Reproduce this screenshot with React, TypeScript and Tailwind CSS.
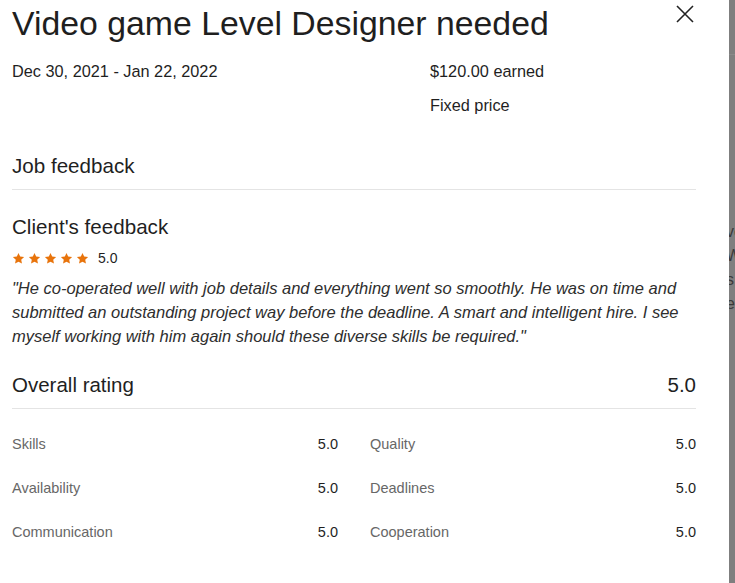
import React from 'react';

type Rating = { label: string; value: string };

const ratings: Rating[] = [
  { label: 'Skills', value: '5.0' },
  { label: 'Quality', value: '5.0' },
  { label: 'Availability', value: '5.0' },
  { label: 'Deadlines', value: '5.0' },
  { label: 'Communication', value: '5.0' },
  { label: 'Cooperation', value: '5.0' },
];

const Star = () => (
  <svg width="13" height="13" viewBox="0 0 24 24" fill="#e8740c">
    <path d="M12 1.8l3.1 6.6 7.2.9-5.3 5 1.4 7.1L12 17.9l-6.4 3.5 1.4-7.1-5.3-5 7.2-.9z" />
  </svg>
);

const CloseIcon = () => (
  <svg width="18" height="18" viewBox="0 0 18 18" fill="none" stroke="#222" strokeWidth="1.6">
    <path d="M1 1l16 16M17 1L1 17" />
  </svg>
);

export default function App() {
  return (
    <div
      className="flex w-[735px] h-[583px] overflow-hidden bg-white text-[#1f1f1f]"
      style={{ fontFamily: '"Liberation Sans", Arial, sans-serif' }}
    >
      {/* modal panel */}
      <div className="w-[729px] shrink-0 bg-white pl-[12px] pr-[33px]">
        <div className="flex items-start justify-between">
          <h1 className="mt-[3px] text-[33.8px] leading-[40px] font-normal">Video game Level Designer needed</h1>
          <div className="mt-[5px] mr-[2px]">
            <CloseIcon />
          </div>
        </div>

        <div className="mt-[16px] grid grid-cols-[418px_1fr] text-[16.3px] leading-[24px]">
          <div>Dec 30, 2021 - Jan 22, 2022</div>
          <div className="flex flex-col gap-[10px]">
            <div>$120.00 earned</div>
            <div>Fixed price</div>
          </div>
        </div>

        <div className="mt-[35px] border-b border-[#e4e4e4] pb-[9px] text-[20.6px] leading-[28px]">Job feedback</div>

        <div className="mt-[23px] text-[20.6px] leading-[28px]">Client's feedback</div>
        <div className="mt-[9px] flex h-[16px] items-center">
          <div className="flex gap-[3px]">
            <Star />
            <Star />
            <Star />
            <Star />
            <Star />
          </div>
          <span className="ml-[9px] text-[14px] leading-[16px]">5.0</span>
        </div>
        <p className="mt-[10px] text-[16.5px] leading-[24px] italic text-[#2e2e2e]">
          "He co-operated well with job details and everything went so smoothly. He was on time and submitted an
          outstanding project way before the deadline. A smart and intelligent hire. I see myself working with him again
          should these diverse skills be required."
        </p>

        <div className="mt-[23px] flex justify-between border-b border-[#e4e4e4] pb-[9px] text-[20.5px] leading-[28px]">
          <span>Overall rating</span>
          <span>5.0</span>
        </div>

        <div className="mt-[25px] grid grid-cols-2 gap-x-[32px] gap-y-[24px] text-[14.5px] leading-[20px]">
          {ratings.map((r) => (
            <div key={r.label} className="flex justify-between">
              <span className="text-[#676767]">{r.label}</span>
              <span>{r.value}</span>
            </div>
          ))}
        </div>
      </div>

      {/* dimmed page behind the modal */}
      <div className="flex-1 overflow-hidden bg-[#7f7f7f] text-[16px] leading-[24px] text-[#3a3a3a]">
        <div className="h-[55px] border-b border-[#8a8a8a]" />
        <div className="mt-[165px] -ml-[3px] flex flex-col whitespace-nowrap">
          <span>ve</span>
          <span>W</span>
          <span>s</span>
          <span>e</span>
        </div>
      </div>
    </div>
  );
}
